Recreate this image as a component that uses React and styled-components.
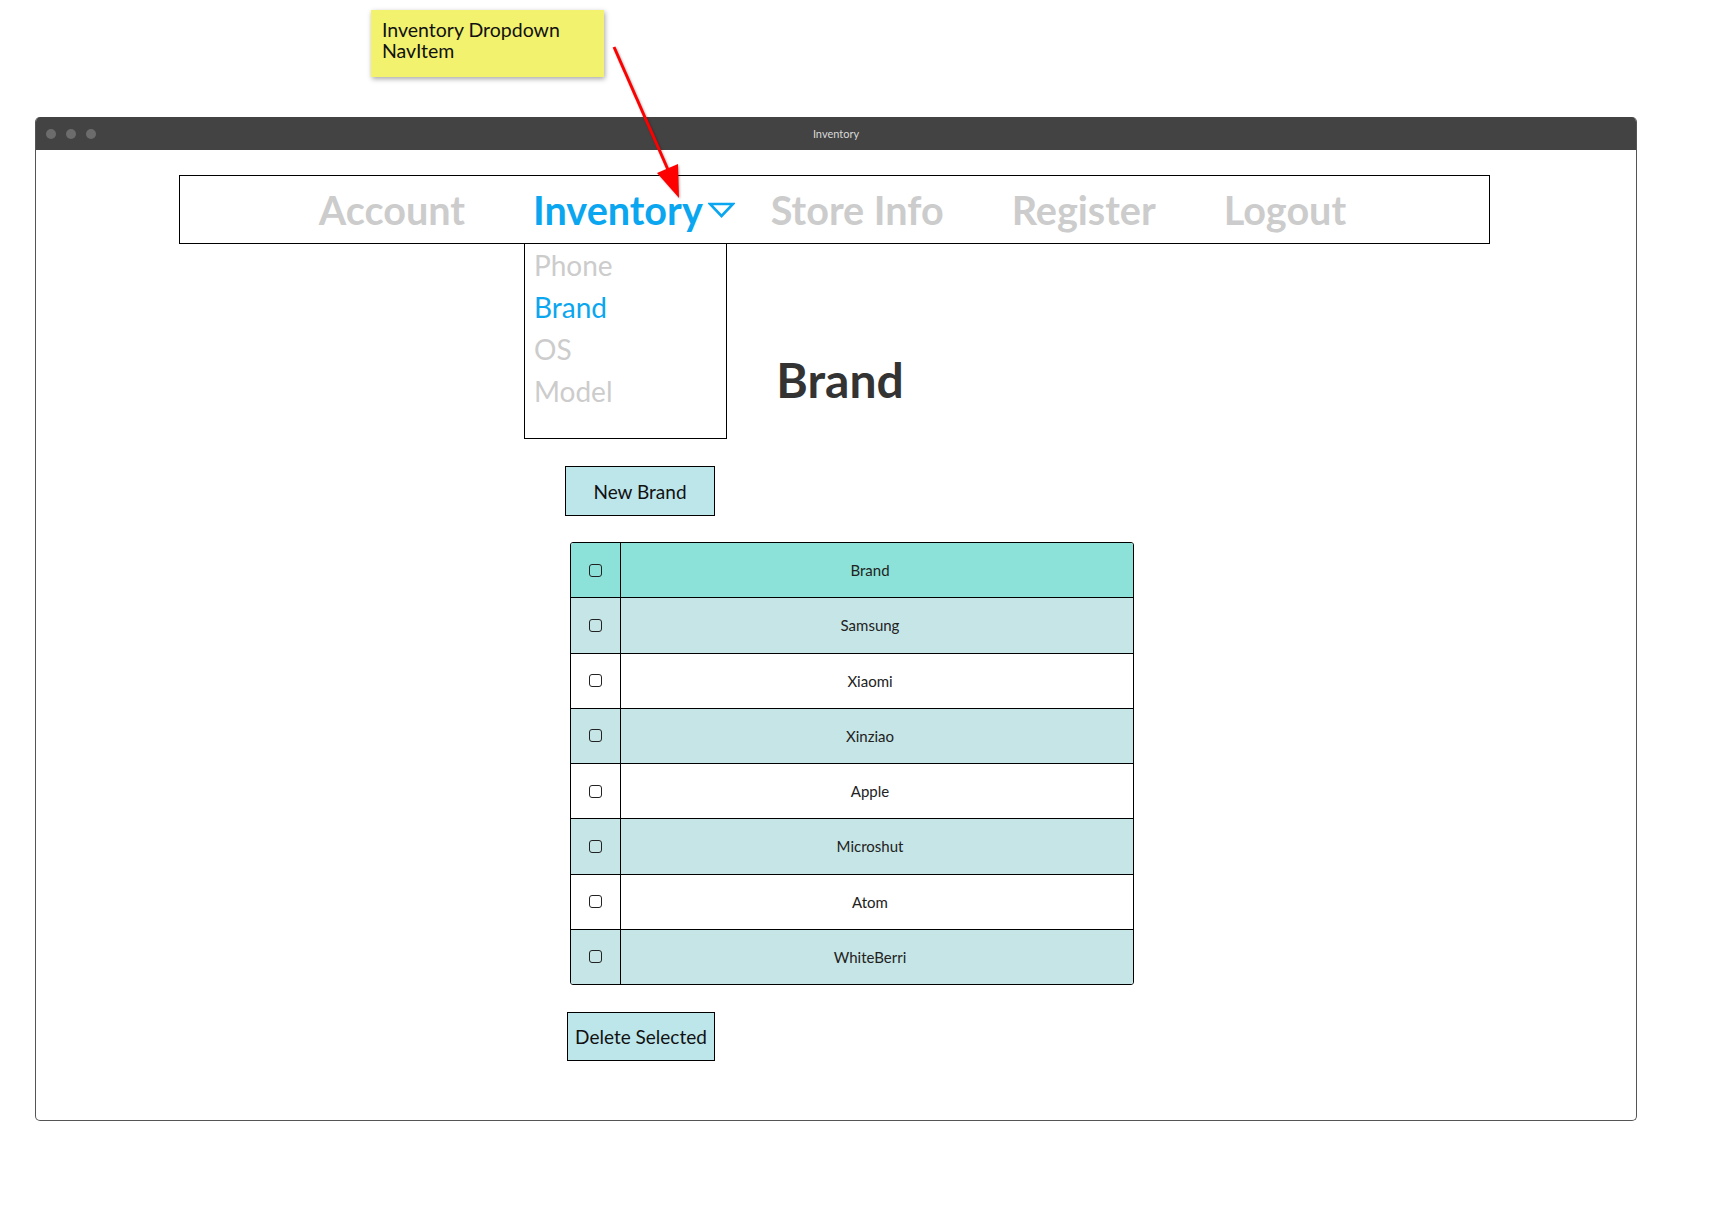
import React from 'react';
import styled, { createGlobalStyle } from 'styled-components';

const GlobalStyle = createGlobalStyle`
  body {
    margin: 0;
    background: #fff;
    font-family: Lato, "Liberation Sans", sans-serif;
  }
`;

const Page = styled.div`
  position: relative;
  width: 1711px;
  height: 1231px;
  overflow: hidden;
`;

const NoteArea = styled.div`
  height: 117px;
  padding: 10px 0 0 371px;
  box-sizing: border-box;
`;

const StickyNote = styled.div`
  width: 233px;
  height: 67px;
  box-sizing: border-box;
  padding: 9px 11px;
  background: #f2f26e;
  box-shadow: 1px 2px 5px rgba(0, 0, 0, 0.35);
  font-size: 19.5px;
  line-height: 21px;
  color: #111;
`;

const Annotation = styled.svg`
  position: absolute;
  left: 0;
  top: 0;
  pointer-events: none;
  filter: drop-shadow(1px 1px 1px rgba(0, 0, 0, 0.3));
`;

const Window = styled.div`
  margin-left: 35px;
  width: 1602px;
  height: 1004px;
  box-sizing: border-box;
  border: 1px solid #555;
  border-top: none;
  border-radius: 5px;
  overflow: hidden;
  display: flex;
  flex-direction: column;
`;

const TitleBar = styled.div`
  height: 33px;
  flex: none;
  background: #434343;
  display: grid;
  grid-template-columns: 1fr auto 1fr;
  align-items: center;
  padding: 0 10px;
`;

const Dots = styled.div`
  display: flex;
  gap: 10px;
`;

const Dot = styled.span`
  width: 10px;
  height: 10px;
  border-radius: 50%;
  background: #6c6c6c;
`;

const WindowTitle = styled.span`
  font-size: 11px;
  color: #d8d8d8;
`;

const Content = styled.div`
  flex: 1;
  padding-top: 25px;
`;

const NavBar = styled.nav`
  position: relative;
  margin-left: 143px;
  width: 1311px;
  height: 69px;
  box-sizing: border-box;
  border: 1px solid #000;
  display: flex;
  justify-content: center;
  align-items: center;
  gap: 68px;
  padding-right: 4px;
`;

const NavItem = styled.div`
  display: flex;
  align-items: center;
  gap: 5px;
  margin-right: ${(p) => p.$pull || 0}px;
  font-size: 39.6px;
  font-weight: 700;
  color: ${(p) => (p.$active ? '#0aa6ef' : '#cccccc')};
`;

const Dropdown = styled.div`
  position: absolute;
  left: 344px;
  top: 68px;
  width: 203px;
  height: 195px;
  box-sizing: border-box;
  border: 1px solid #000;
  border-top: none;
  padding-left: 9px;
  background: #fff;
`;

const DropItem = styled.div`
  font-size: 28px;
  line-height: 42px;
  color: ${(p) => (p.$active ? '#0aa6ef' : '#cccccc')};
`;

const Heading = styled.h1`
  margin: 108px 0 0;
  padding-left: 8px;
  text-align: center;
  font-size: 48px;
  line-height: 56px;
  font-weight: 700;
  color: #333;
`;

const Column = styled.div`
  margin: 58px 0 0 529px;
  display: flex;
  flex-direction: column;
  align-items: flex-start;
`;

const ActionButton = styled.button`
  width: ${(p) => p.$w}px;
  height: ${(p) => p.$h}px;
  margin-left: ${(p) => p.$offset || 0}px;
  box-sizing: border-box;
  border: 1px solid #000;
  background: #bde6eb;
  font-family: Lato, "Liberation Sans", sans-serif;
  font-size: 19px;
  color: #111;
  padding: 0;
`;

const Table = styled.div`
  margin: 26px 0 27px 5px;
  width: 564px;
  box-sizing: border-box;
  border: 1px solid #000;
  border-radius: 3px;
  overflow: hidden;
`;

const Row = styled.div`
  display: grid;
  grid-template-columns: 50px 1fr;
  height: 54.25px;
  background: ${(p) => p.$bg};
  & + & {
    border-top: 1px solid #000;
  }
`;

const CheckCell = styled.div`
  border-right: 1px solid #000;
  display: flex;
  align-items: center;
  justify-content: center;
`;

const Checkbox = styled.span`
  width: 13px;
  height: 13px;
  box-sizing: border-box;
  border: 1.5px solid #222;
  border-radius: 3px;
`;

const TextCell = styled.div`
  display: flex;
  align-items: center;
  justify-content: center;
  padding-right: 14px;
  font-size: 15px;
  color: #222;
`;

const brands = ['Samsung', 'Xiaomi', 'Xinziao', 'Apple', 'Microshut', 'Atom', 'WhiteBerri'];

function Caret() {
  return (
    <svg width="27" height="16" viewBox="0 0 27 16">
      <polygon points="2,2 25,2 13.5,14" fill="none" stroke="#0aa6ef" strokeWidth="2.6" strokeLinejoin="miter" />
    </svg>
  );
}

export default function App() {
  return (
    <Page>
      <GlobalStyle />
      <NoteArea>
        <StickyNote>
          Inventory Dropdown
          <br />
          NavItem
        </StickyNote>
      </NoteArea>
      <Window>
        <TitleBar>
          <Dots>
            <Dot />
            <Dot />
            <Dot />
          </Dots>
          <WindowTitle>Inventory</WindowTitle>
          <span />
        </TitleBar>
        <Content>
          <NavBar>
            <NavItem>Account</NavItem>
            <NavItem $active $pull={-32}>
              Inventory
              <Caret />
            </NavItem>
            <NavItem>Store Info</NavItem>
            <NavItem>Register</NavItem>
            <NavItem>Logout</NavItem>
            <Dropdown>
              <DropItem>Phone</DropItem>
              <DropItem $active>Brand</DropItem>
              <DropItem>OS</DropItem>
              <DropItem>Model</DropItem>
            </Dropdown>
          </NavBar>
          <Heading>Brand</Heading>
          <Column>
            <ActionButton $w={150} $h={50}>New Brand</ActionButton>
            <Table>
              <Row $bg="#8ce2d8">
                <CheckCell><Checkbox /></CheckCell>
                <TextCell>Brand</TextCell>
              </Row>
              {brands.map((b, i) => (
                <Row key={b} $bg={i % 2 === 0 ? '#c6e5e6' : '#ffffff'}>
                  <CheckCell><Checkbox /></CheckCell>
                  <TextCell>{b}</TextCell>
                </Row>
              ))}
            </Table>
            <ActionButton $w={148} $h={49} $offset={2}>Delete Selected</ActionButton>
          </Column>
        </Content>
      </Window>
      <Annotation width="1711" height="1231">
        <line x1="614" y1="47" x2="669" y2="172" stroke="#f00" strokeWidth="3" />
        <polygon points="679,198 657,173 678,164" fill="#f00" />
      </Annotation>
    </Page>
  );
}
